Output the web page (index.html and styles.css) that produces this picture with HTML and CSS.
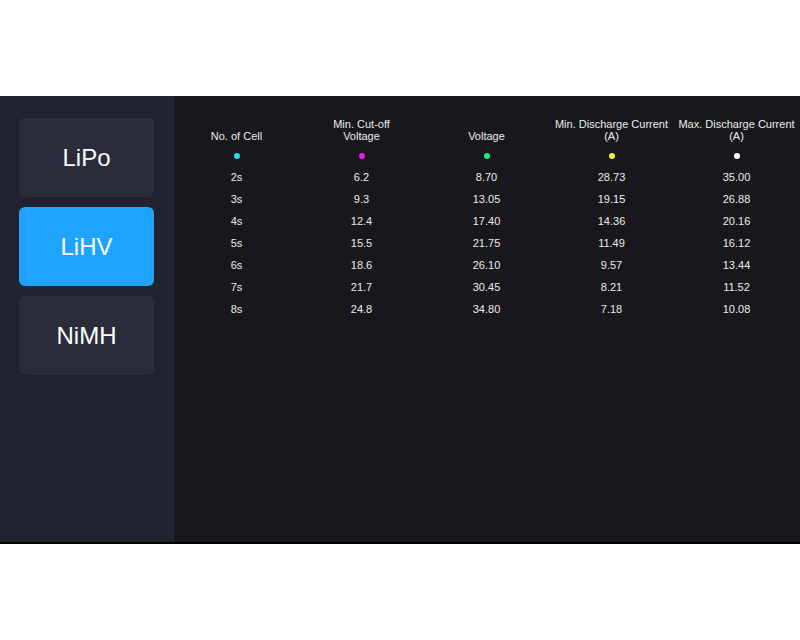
FILE: index.html
```html
<!DOCTYPE html>
<html lang="en">
<head>
  <meta charset="UTF-8">
  <title>Battery Types</title>
  <link rel="stylesheet" href="styles.css">
</head>
<body>
  <div class="app">
    <!-- battery type picker -->
    <div class="sidebar">
      <button class="type">LiPo</button>
      <button class="type active">LiHV</button>
      <button class="type">NiMH</button>
    </div>

    <!-- voltage / current table -->
    <div class="main">
      <div class="grid">
        <div class="head">No. of Cell</div>
        <div class="head">Min. Cut-off<br>Voltage</div>
        <div class="head">Voltage</div>
        <div class="head">Min. Discharge Current<br>(A)</div>
        <div class="head">Max. Discharge Current<br>(A)</div>

        <div class="dot-cell"><span class="dot cyan"></span></div>
        <div class="dot-cell"><span class="dot magenta"></span></div>
        <div class="dot-cell"><span class="dot green"></span></div>
        <div class="dot-cell"><span class="dot yellow"></span></div>
        <div class="dot-cell"><span class="dot white"></span></div>

        <div class="cell">2s</div><div class="cell">6.2</div><div class="cell">8.70</div><div class="cell">28.73</div><div class="cell">35.00</div>
        <div class="cell">3s</div><div class="cell">9.3</div><div class="cell">13.05</div><div class="cell">19.15</div><div class="cell">26.88</div>
        <div class="cell">4s</div><div class="cell">12.4</div><div class="cell">17.40</div><div class="cell">14.36</div><div class="cell">20.16</div>
        <div class="cell">5s</div><div class="cell">15.5</div><div class="cell">21.75</div><div class="cell">11.49</div><div class="cell">16.12</div>
        <div class="cell">6s</div><div class="cell">18.6</div><div class="cell">26.10</div><div class="cell">9.57</div><div class="cell">13.44</div>
        <div class="cell">7s</div><div class="cell">21.7</div><div class="cell">30.45</div><div class="cell">8.21</div><div class="cell">11.52</div>
        <div class="cell">8s</div><div class="cell">24.8</div><div class="cell">34.80</div><div class="cell">7.18</div><div class="cell">10.08</div>
      </div>
    </div>
  </div>
</body>
</html>
```

FILE: styles.css
```css
body { margin: 0; background: #fff; font-family: "Liberation Sans", Arial, sans-serif; }
.app {
  margin-top: 96px; height: 446px; display: flex; background: #18181c;
  border-bottom: 2px solid #000;
}
.sidebar {
  width: 174px; border-right: 1px solid #262835; background: #21222f;
  padding: 22px 0 0 19px; box-sizing: border-box;
  display: flex; flex-direction: column; gap: 10px;
}
.type {
  width: 135px; height: 79px; border: none; border-radius: 6px;
  background: #2a2c3b; color: #fff; font-family: inherit; font-size: 24px; cursor: pointer;
}
.type.active { background: #20a2ff; }
.main { flex: 1; padding-top: 118px; padding-top: 22px; }
.grid { display: grid; grid-template-columns: repeat(5, 125px); color: #ececec; font-size: 11px; }
.head {
  height: 24px; line-height: 12px; text-align: center;
  display: flex; align-items: flex-end; justify-content: center;
}
.dot-cell { height: 20px; margin-top: 4px; display: flex; align-items: center; justify-content: center; }
.dot { width: 6px; height: 6px; border-radius: 50%; }
.cyan { background: #1fe0f0; }
.magenta { background: #e81ce8; }
.green { background: #22e77a; }
.yellow { background: #f2f226; }
.white { background: #fff; }
.cell { height: 22px; line-height: 22px; text-align: center; }
```
